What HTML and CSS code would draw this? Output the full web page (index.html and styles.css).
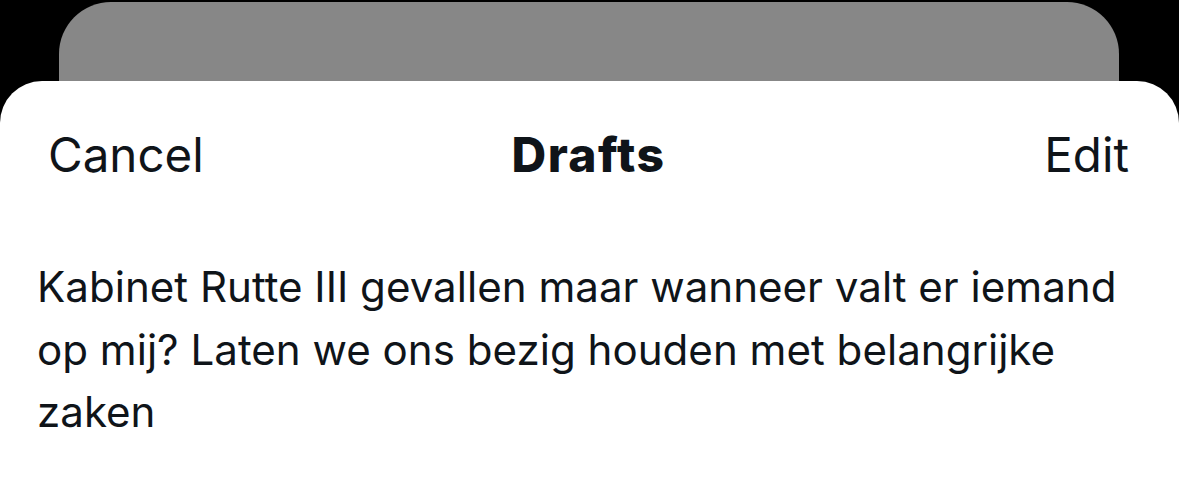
FILE: index.html
```html
<!DOCTYPE html>
<html>
<head>
<meta charset="utf-8">
<link rel="stylesheet" href="styles.css">
</head>
<body>
  <div class="backcard"></div>
  <div class="sheet">
    <div class="header">
      <span class="btn btn-left">Cancel</span>
      <span class="title">Drafts</span>
      <span class="btn btn-right">Edit</span>
    </div>
    <p class="draft">Kabinet Rutte III gevallen maar wanneer valt er iemand op mij? Laten we ons bezig houden met belangrijke zaken</p>
  </div>
</body>
</html>
```
FILE: styles.css
```css
html, body {
  margin: 0;
  padding: 0;
  background: #000;
  height: 478px;
  overflow: hidden;
}
body {
  display: flex;
  flex-direction: column;
  font-family: Inter, "Noto Sans", sans-serif;
  color: #0f1419;
}
.backcard {
  margin: 2px 0 0 59px;
  width: 1060px;
  height: 79px;
  flex: none;
  background: #878787;
  border-radius: 52px 52px 0 0;
}
.sheet {
  flex: 1;
  background: #fff;
  border-radius: 42px 42px 0 0;
}
.header {
  display: grid;
  grid-template-columns: 1fr auto 1fr;
  align-items: baseline;
  padding: 44px 50px 0 48px;
}
.btn {
  font-size: 47.5px;
  font-weight: 400;
  line-height: 60px;
}
.btn-left { justify-self: start; }
.btn-right { justify-self: end; }
.title {
  font-size: 48px;
  font-weight: 800;
  letter-spacing: 1.4px;
  line-height: 60px;
}
.draft {
  margin: 0;
  padding: 0 50px 0 37px;
  margin-top: 71px;
  font-size: 42.1px;
  line-height: 62.5px;
}
```
